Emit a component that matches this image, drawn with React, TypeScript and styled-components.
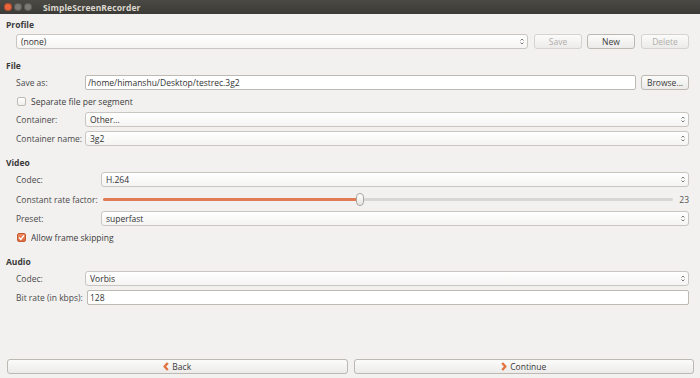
import React from 'react';
import styled, { createGlobalStyle } from 'styled-components';

const GlobalStyle = createGlobalStyle`
  html, body {
    margin: 0;
    padding: 0;
    background: #f2f1f0;
  }
  body {
    font-family: "Open Sans", "DejaVu Sans", sans-serif;
    font-size: 8.5px;
    color: #3c3c3c;
  }
  * {
    box-sizing: border-box;
  }
`;

const Window = styled.div`
  width: 700px;
  height: 378px;
  display: flex;
  flex-direction: column;
  background: #f2f1f0;
  overflow: hidden;
`;

const TitleBar = styled.div`
  height: 14px;
  flex: none;
  display: flex;
  align-items: center;
  padding-left: 4px;
  background: linear-gradient(#4a4944, #3c3b37);
`;

const WinButtons = styled.div`
  display: flex;
  gap: 2px;
  width: 39px;
`;

const WinDot = styled.span<{ $color: string }>`
  width: 8px;
  height: 8px;
  border-radius: 50%;
  background: ${p => p.$color};
  box-shadow: inset 0 0 0 1px rgba(0, 0, 0, 0.25);
`;

const Title = styled.div`
  font-weight: 700;
  font-size: 8.5px;
  color: #dcd8cf;
  letter-spacing: 0.1px;
`;

const Content = styled.div`
  flex: 1;
  display: flex;
  flex-direction: column;
  gap: 11px;
  padding: 5px 11px 0 6px;
`;

const Section = styled.section`
  display: flex;
  flex-direction: column;
`;

const Heading = styled.div`
  height: 12px;
  line-height: 12px;
  margin-bottom: 3px;
  font-weight: 700;
  color: #3a3a3a;
`;

const Body = styled.div<{ $gap?: number }>`
  display: flex;
  flex-direction: column;
  gap: ${p => p.$gap ?? 4}px;
  padding-left: 10px;
`;

const Row = styled.div<{ $label?: number }>`
  display: grid;
  grid-template-columns: ${p => (p.$label ? `${p.$label}px 1fr` : '1fr')};
  align-items: center;
  height: 15px;
`;

const Label = styled.span`
  color: #4a4a4a;
  white-space: nowrap;
`;

const Line = styled.div<{ $gap?: number }>`
  display: flex;
  align-items: center;
  gap: ${p => p.$gap ?? 5}px;
  height: 15px;
  min-width: 0;
`;

const Field = styled.div`
  flex: 1;
  height: 15px;
  display: flex;
  align-items: center;
  padding-left: 2px;
  background: #ffffff;
  border: 1px solid #bdb9b3;
  border-radius: 2px;
  color: #333;
  min-width: 0;
`;

const Combo = styled.div`
  flex: 1;
  height: 15px;
  display: flex;
  align-items: center;
  justify-content: space-between;
  padding: 0 3px 0 4px;
  background: linear-gradient(#ffffff, #f5f4f3);
  border: 1px solid #c9c6c1;
  border-radius: 3px;
  color: #333;
  min-width: 0;
`;

const Button = styled.div<{ $disabled?: boolean; $w?: number }>`
  width: ${p => (p.$w ? `${p.$w}px` : 'auto')};
  flex: ${p => (p.$w ? 'none' : '1')};
  height: 15px;
  display: flex;
  align-items: center;
  justify-content: center;
  gap: 3px;
  background: linear-gradient(#fbfbfa, #ecebe9);
  border: 1px solid ${p => (p.$disabled ? '#d6d3ce' : '#bcb8b2')};
  border-radius: 3px;
  color: ${p => (p.$disabled ? '#b0aeaa' : '#3a3a3a')};
`;

const CheckRow = styled.label`
  display: flex;
  align-items: center;
  gap: 5px;
  height: 14px;
  padding-left: 1px;
  color: #3c3c3c;
`;

const Box = styled.span<{ $checked?: boolean }>`
  width: 9px;
  height: 9px;
  border-radius: 2px;
  display: flex;
  align-items: center;
  justify-content: center;
  border: 1px solid ${p => (p.$checked ? '#c65a33' : '#bdb9b3')};
  background: ${p => (p.$checked ? 'linear-gradient(#f08a60, #dc6a40)' : 'linear-gradient(#fff, #efeeec)')};
`;

const Slider = styled.div`
  flex: 1;
  position: relative;
  height: 15px;
  margin-left: 2px;
`;

const Track = styled.div`
  position: absolute;
  left: 0;
  right: 0;
  top: 6px;
  height: 3px;
  border-radius: 2px;
  background: #d9d7d3;
`;

const Fill = styled.div`
  position: absolute;
  left: 0;
  top: 6px;
  height: 3px;
  border-radius: 2px;
  background: #e07b55;
`;

const Knob = styled.div`
  position: absolute;
  top: 1px;
  width: 8px;
  height: 13px;
  margin-left: -4px;
  border-radius: 4px;
  background: linear-gradient(#ffffff, #e6e4e1);
  border: 1px solid #aaa6a0;
`;

const Value = styled.span`
  width: 12px;
  text-align: right;
  color: #555;
  flex: none;
`;

const Footer = styled.div`
  margin-top: auto;
  display: flex;
  gap: 6px;
  padding: 0 6px 4px 7px;
`;

const Arrows = () => (
  <svg width="4" height="7" viewBox="0 0 4 7">
    <path d="M0.5 2.5 L2 1 L3.5 2.5 M0.5 4.5 L2 6 L3.5 4.5" stroke="#6a6a6a" strokeWidth="0.9" fill="none" />
  </svg>
);

const Check = () => (
  <svg width="7" height="7" viewBox="0 0 7 7">
    <path d="M1 3.6 L2.8 5.4 L6 1.4" stroke="#fff" strokeWidth="1.4" fill="none" />
  </svg>
);

const Chevron = ({ dir }: { dir: 'left' | 'right' }) => (
  <svg width="6" height="9" viewBox="0 0 6 9">
    <path
      d={dir === 'left' ? 'M4.8 1 L1.6 4.5 L4.8 8' : 'M1.2 1 L4.4 4.5 L1.2 8'}
      stroke="#e2733f"
      strokeWidth="2.4"
      strokeLinejoin="round"
      fill="none"
    />
  </svg>
);

const ComboBox = ({ value }: { value: string }) => (
  <Combo>
    <span>{value}</span>
    <Arrows />
  </Combo>
);

export default function App() {
  const crf = 23;
  const pct = (crf / 51) * 100;
  return (
    <Window>
      <GlobalStyle />
      <TitleBar>
        <WinButtons>
          <WinDot $color="#e8663d" />
          <WinDot $color="#7b7a75" />
          <WinDot $color="#7b7a75" />
        </WinButtons>
        <Title>SimpleScreenRecorder</Title>
      </TitleBar>
      <Content>
        <Section>
          <Heading>Profile</Heading>
          <Body>
            <Line $gap={5}>
              <ComboBox value="(none)" />
              <Button $disabled $w={48} style={{ marginLeft: 1 }}>Save</Button>
              <Button $w={48}>New</Button>
              <Button $disabled $w={48} style={{ marginLeft: 1 }}>Delete</Button>
            </Line>
          </Body>
        </Section>

        <Section>
          <Heading>File</Heading>
          <Body>
            <Row $label={69}>
              <Label>Save as:</Label>
              <Line>
                <Field>/home/himanshu/Desktop/testrec.3g2</Field>
                <Button $w={48}>Browse...</Button>
              </Line>
            </Row>
            <CheckRow>
              <Box />
              Separate file per segment
            </CheckRow>
            <Row $label={69}>
              <Label>Container:</Label>
              <Line>
                <ComboBox value="Other..." />
              </Line>
            </Row>
            <Row $label={69}>
              <Label>Container name:</Label>
              <Line>
                <ComboBox value="3g2" />
              </Line>
            </Row>
          </Body>
        </Section>

        <Section>
          <Heading>Video</Heading>
          <Body $gap={4.5}>
            <Row $label={85}>
              <Label>Codec:</Label>
              <Line>
                <ComboBox value="H.264" />
              </Line>
            </Row>
            <Row $label={85}>
              <Label>Constant rate factor:</Label>
              <Line $gap={4}>
                <Slider>
                  <Track />
                  <Fill style={{ width: `${pct}%` }} />
                  <Knob style={{ left: `${pct}%` }} />
                </Slider>
                <Value>{crf}</Value>
              </Line>
            </Row>
            <Row $label={85}>
              <Label>Preset:</Label>
              <Line>
                <ComboBox value="superfast" />
              </Line>
            </Row>
            <CheckRow>
              <Box $checked>
                <Check />
              </Box>
              Allow frame skipping
            </CheckRow>
          </Body>
        </Section>

        <Section>
          <Heading>Audio</Heading>
          <Body>
            <Row $label={69}>
              <Label>Codec:</Label>
              <Line>
                <ComboBox value="Vorbis" />
              </Line>
            </Row>
            <Row $label={71}>
              <Label>Bit rate (in kbps):</Label>
              <Line>
                <Field>128</Field>
              </Line>
            </Row>
          </Body>
        </Section>
      </Content>
      <Footer>
        <Button>
          <Chevron dir="left" />
          Back
        </Button>
        <Button>
          <Chevron dir="right" />
          Continue
        </Button>
      </Footer>
    </Window>
  );
}
